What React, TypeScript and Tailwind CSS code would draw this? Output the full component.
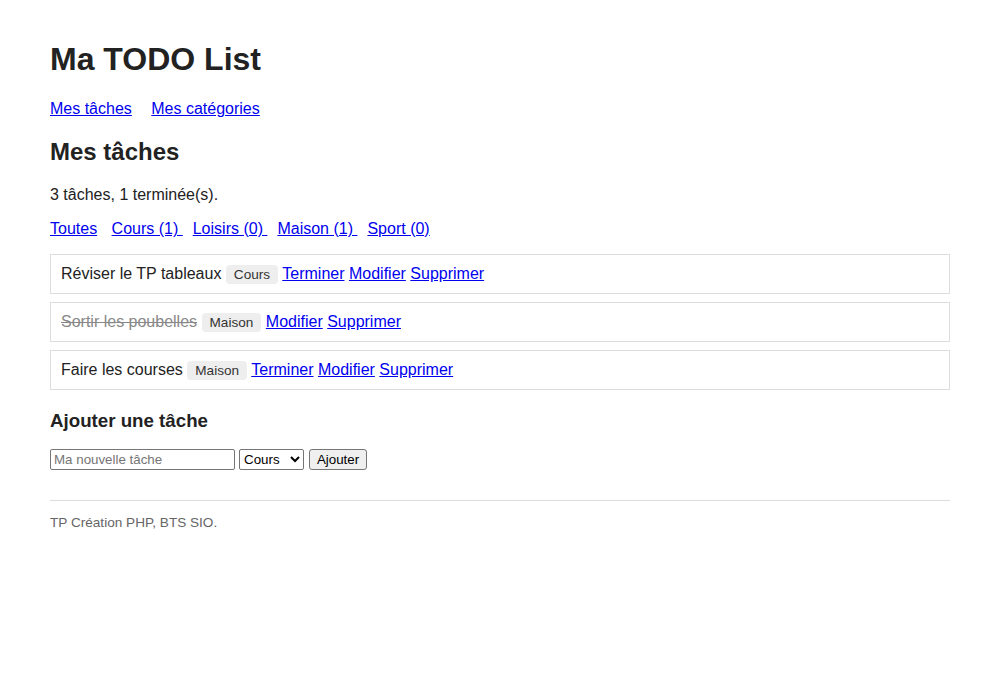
import React from "react";

const tasks = [
  { title: "Réviser le TP tableaux", cat: "Cours", done: false },
  { title: "Sortir les poubelles", cat: "Maison", done: true },
  { title: "Faire les courses", cat: "Maison", done: false },
];

const filters = ["Cours (1) ", "Loisirs (0) ", "Maison (1) ", "Sport (0)"];

export default function App() {
  return (
    <div
      className="bg-white text-[#222] text-[16px] px-[50px] pt-[20px] pb-[40px] min-h-[700px]"
      style={{ fontFamily: '"Liberation Sans", Arial, sans-serif' }}
    >
      <h1 className="text-[32px] font-bold leading-[37px] mt-[21px] mb-[22px]">Ma TODO List</h1>
      <nav className="leading-[18px]">
        <a href="#" className="text-[#0000ee] underline mr-[15px]">Mes tâches</a>{" "}
        <a href="#" className="text-[#0000ee] underline">Mes catégories</a>
      </nav>
      <h2 className="text-[24px] font-bold leading-[28px] mt-[20px] mb-[20px]">Mes tâches</h2>
      <p className="leading-[18px] mb-[16px]">3 tâches, 1 terminée(s).</p>
      <div className="leading-[18px] mb-[16px]">
        <a href="#" className="text-[#0000ee] underline mr-[10px]">Toutes</a>{" "}
        {filters.map((f) => (
          <a key={f} href="#" className="text-[#0000ee] underline mr-[10px] whitespace-pre">{f}</a>
        ))}
      </div>
      <ul>
        {tasks.map((t) => (
          <li key={t.title} className="border border-[#ddd] px-[10px] py-[10px] h-[40px] leading-[18px] mb-[8px]">
            <span className={t.done ? "line-through text-[#888]" : ""}>{t.title}</span>{" "}
            <span className="bg-[#eee] text-[#333] text-[13.6px] leading-[12px] px-[8px] py-[2px] rounded-[4px]">{t.cat}</span>{" "}
            {!t.done && (
              <>
                <a href="#" className="text-[#0000ee] underline">Terminer</a>{" "}
              </>
            )}
            <a href="#" className="text-[#0000ee] underline">Modifier</a>{" "}
            <a href="#" className="text-[#0000ee] underline">Supprimer</a>
          </li>
        ))}
      </ul>
      <h3 className="text-[18.72px] font-bold leading-[21.5px] mt-[20px] mb-[17.5px]">Ajouter une tâche</h3>
      <form className="flex items-center h-[21px] text-[13.33px]" onSubmit={(e) => e.preventDefault()}>
        <input
          type="text"
          placeholder="Ma nouvelle tâche"
          className="w-[185px] h-[21px] border border-[#767676] rounded-[2px] px-[3px] py-[1px] placeholder:text-[#757575] text-black"
        />
        <select className="ml-[4px] w-[65px] h-[21px] border border-[#767676] rounded-[2px] text-black" defaultValue="Cours">
          <option>Cours</option>
          <option>Loisirs</option>
          <option>Maison</option>
          <option>Sport</option>
        </select>
        <button type="submit" className="ml-[5px] w-[58px] h-[21px] bg-[#efefef] border border-[#767676] rounded-[3px] text-black">
          Ajouter
        </button>
      </form>
      <footer className="mt-[30px] border-t border-[#ddd] pt-[14px] text-[13.6px] leading-[16px] text-[#666]">
        TP Création PHP, BTS SIO.
      </footer>
    </div>
  );
}
